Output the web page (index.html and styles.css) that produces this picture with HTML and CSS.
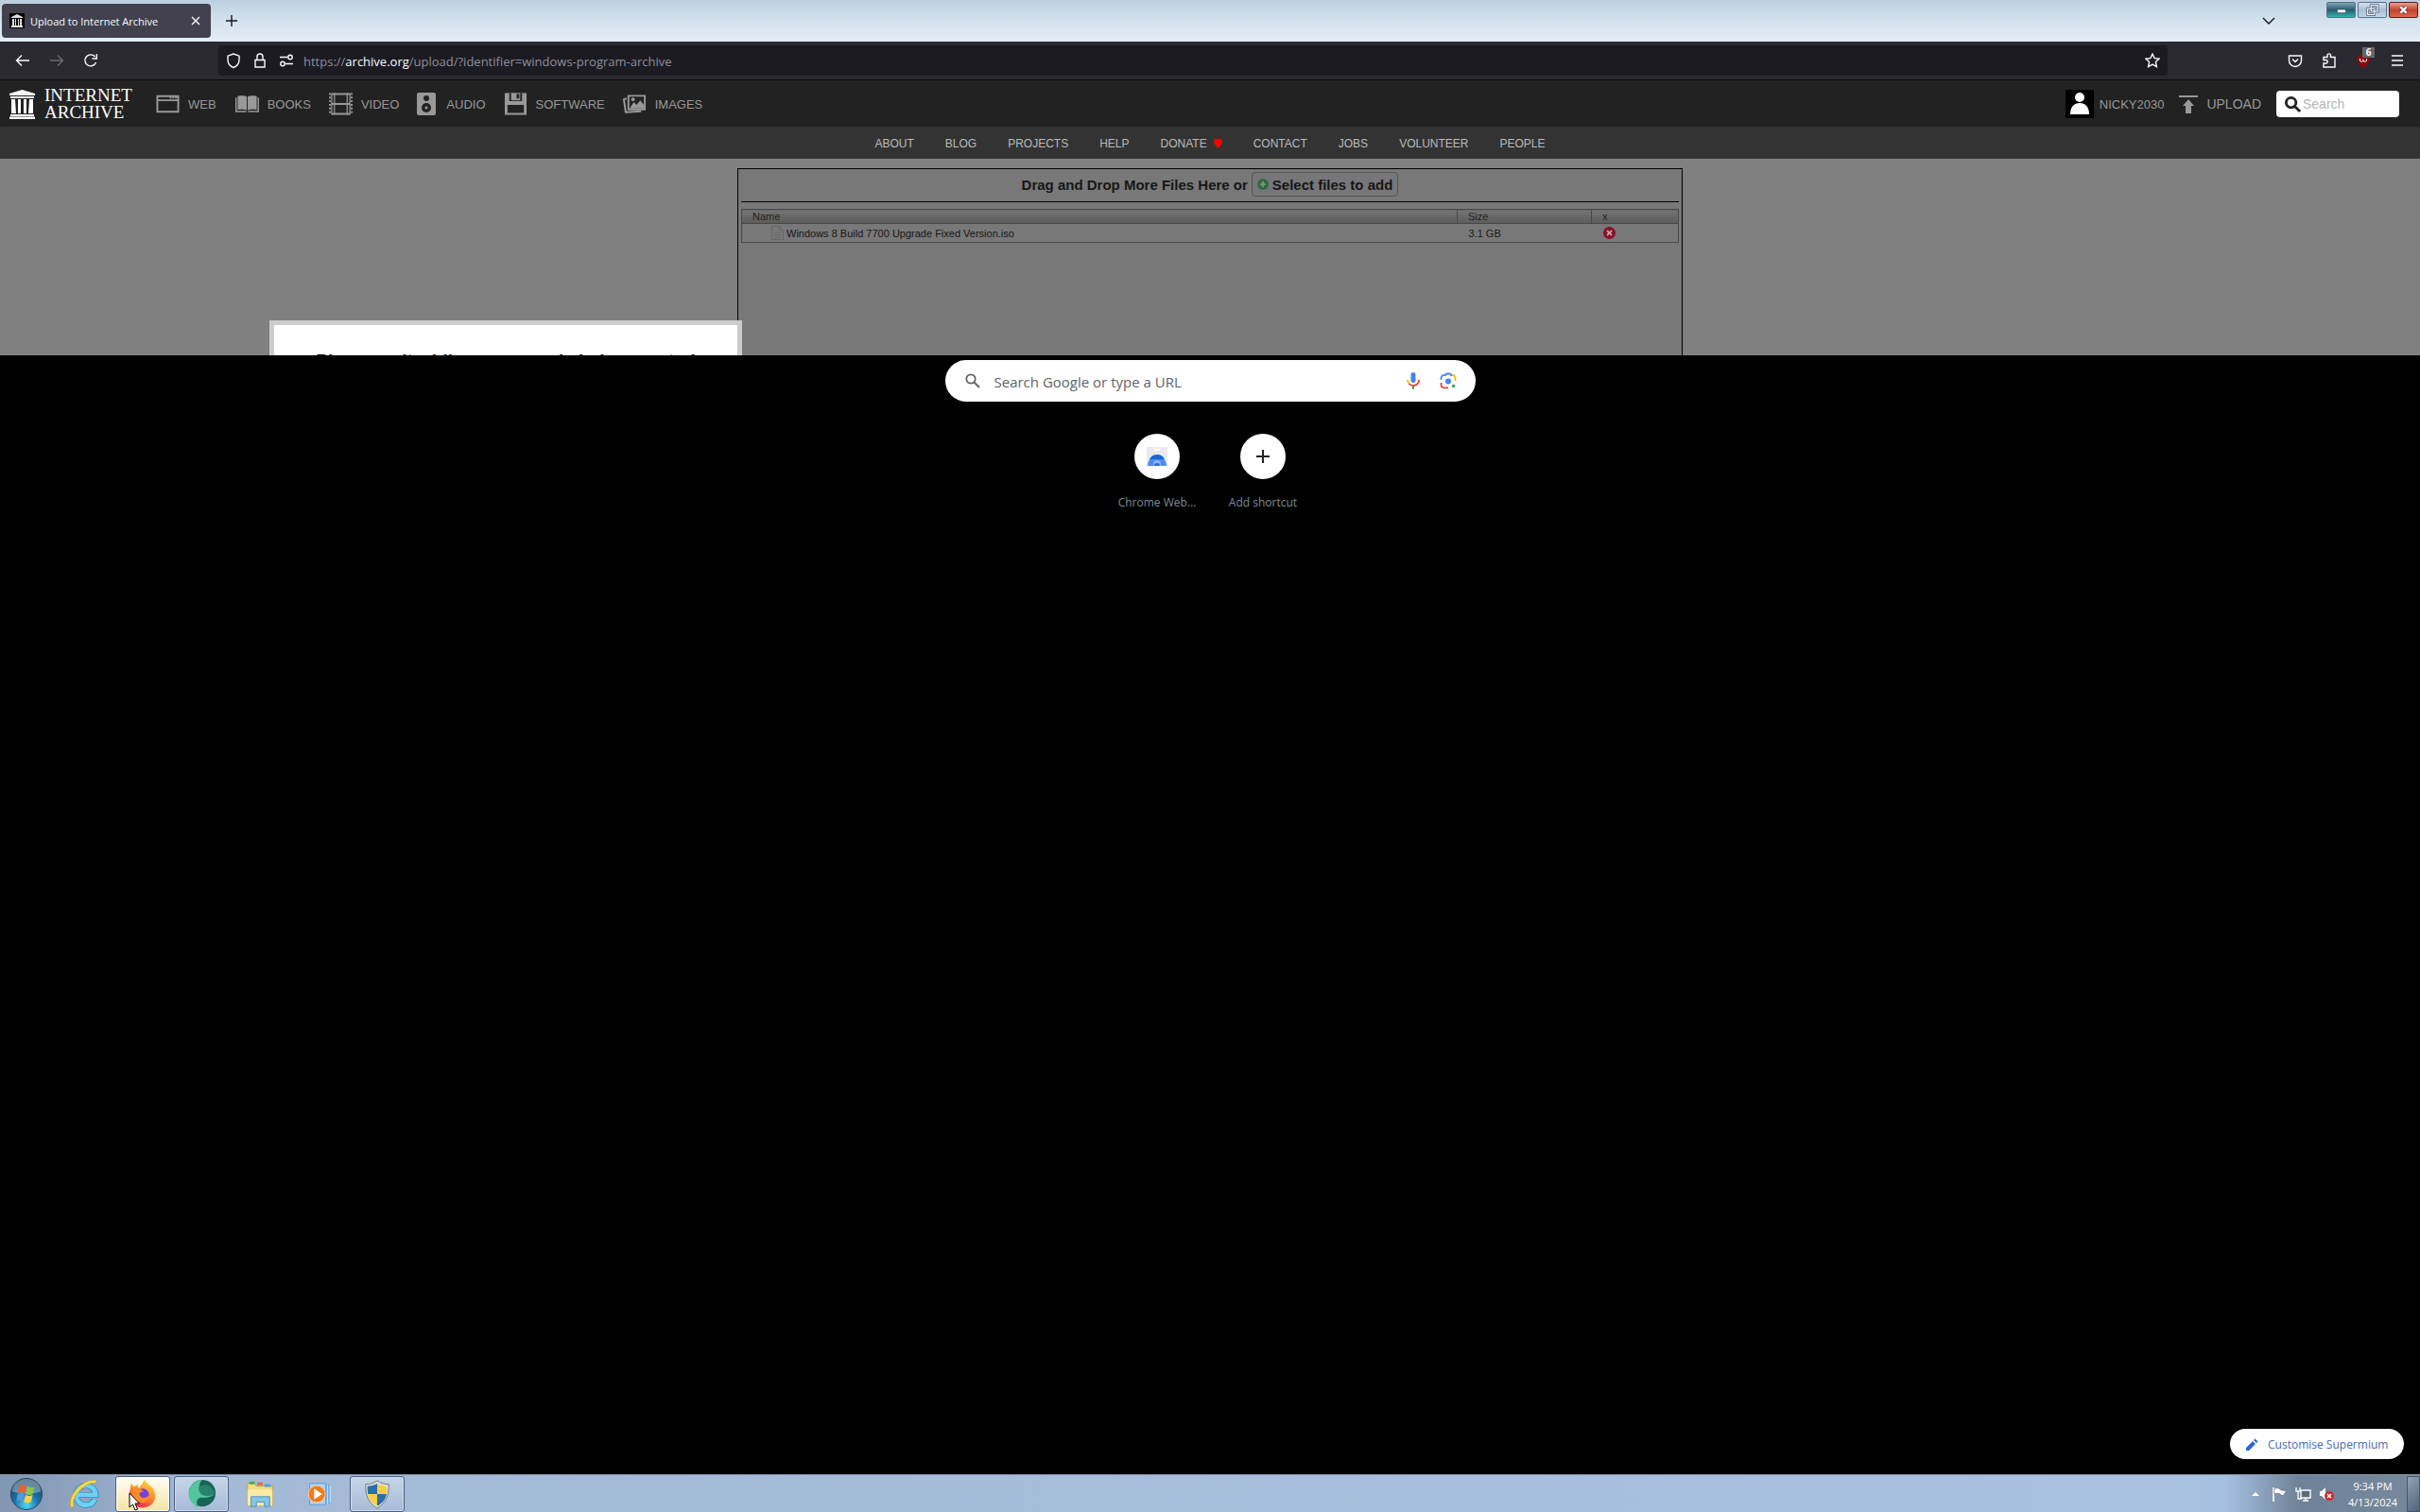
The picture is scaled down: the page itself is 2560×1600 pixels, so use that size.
FILE: index.html
```html
<!DOCTYPE html>
<html lang="en">
<head>
<meta charset="utf-8">
<title>Upload to Internet Archive</title>
<link rel="stylesheet" href="styles.css">
</head>
<body>
<div class="desktop">

  <header class="browser">
    <div class="tabstrip">
      <div class="tab">
        <svg class="favicon" viewBox="0 0 16 16"><path d="M0 0h16v16H0z" fill="#050505"/><path d="M2 4l6-3 6 3v1H2zM3 6h2v7H3zM6 6h1v7H6zM9 6h1v7H9zM11 6h2v7h-2zM2 13h12v2H2z" fill="#ddd"/></svg>
        <span class="tab-title">Upload to Internet Archive</span>
        <button class="icon-btn tab-close" aria-label="Close tab"><svg viewBox="0 0 16 16"><path d="M4 4l8 8M12 4l-8 8" class="line"/></svg></button>
      </div>
      <button class="icon-btn new-tab" aria-label="New tab"><svg viewBox="0 0 16 16"><path d="M8 2v12M2 8h12" class="line"/></svg></button>
      <button class="icon-btn list-tabs" aria-label="List all tabs"><svg viewBox="0 0 16 16"><path d="M2 5l6 6 6-6" class="line"/></svg></button>
      <div class="window-controls">
        <button class="win win-min" aria-label="Minimize"><svg viewBox="0 0 31 17"><path d="M11 8h10v4H11z" fill="#fff" stroke="#345" stroke-width=".7"/></svg></button>
        <button class="win win-max" aria-label="Restore"><svg viewBox="0 0 31 17"><path d="M14 3h8v7h-8zM10 7h8v7h-8z" fill="none" stroke="#4a5a70" stroke-width="3"/><path d="M14 3h8v7h-8zM10 7h8v7h-8z" fill="none" stroke="#eef4fa" stroke-width="1.4"/></svg></button>
        <button class="win win-close" aria-label="Close"><svg viewBox="0 0 31 17"><path d="M12 5l7 7M19 5l-7 7" stroke="#613" stroke-width="4.4" fill="none"/><path d="M12 5l7 7M19 5l-7 7" stroke="#fff" stroke-width="2.8" fill="none"/></svg></button>
      </div>
    </div>
    <div class="toolbar">
      <div class="history">
        <button class="icon-btn" aria-label="Back"><svg viewBox="0 0 16 16"><path d="M15 8H2M7 2.500L1.500 8 7 13.500" class="line"/></svg></button>
        <button class="icon-btn dim" aria-label="Forward"><svg viewBox="0 0 16 16"><path d="M1 8h13M9 2.500L14.500 8 9 13.500" class="line"/></svg></button>
        <button class="icon-btn" aria-label="Reload"><svg viewBox="0 0 16 16"><path d="M13.500 10A6 6 0 1 1 12.500 4M14.300 1v5H9.500" class="line"/></svg></button>
      </div>
      <div class="urlbar">
        <svg class="ub" viewBox="0 0 16 16"><path d="M8 1l6 2.200v4C14 11 11.500 14 8 15.500 4.500 14 2 11 2 7.200v-4z" class="line"/></svg>
        <svg class="ub" viewBox="0 0 16 16"><path d="M3 7.500h10V15H3zM5 7.500V4a3 3 0 0 1 6 0v3.500" class="line"/></svg>
        <svg class="ub" viewBox="0 0 16 16"><path d="M1 4.500h8M7 11.500h8" class="line"/><circle cx="12" cy="4.500" r="2.200" class="line"/><circle cx="4" cy="11.500" r="2.200" class="line"/></svg>
        <span class="url">https://<b>archive.org</b>/upload/?identifier=windows-program-archive</span>
        <button class="icon-btn" aria-label="Bookmark"><svg viewBox="0 0 16 16"><path d="M8 1l2.100 4.600 5 .6-3.700 3.400 1 5L8 12.100l-4.400 2.500 1-5L.9 6.200l5-.6z" class="line"/></svg></button>
      </div>
      <div class="addons">
        <button class="icon-btn" aria-label="Pocket"><svg viewBox="0 0 16 16"><path d="M1.500 3h13v5a6.500 6.500 0 0 1-13 0zM5 6.500l3 3 3-3" class="line"/></svg></button>
        <button class="icon-btn" aria-label="Extensions"><svg viewBox="0 0 16 16"><path d="M2 15v-4h2.500a1.700 1.700 0 0 0 0-3.500H2V4.500h4V2.600a1.700 1.700 0 0 1 3.500 0v1.900H14V15z" class="line"/></svg></button>
        <button class="icon-btn ublock" aria-label="Ad blocker"><svg viewBox="0 0 16 16"><path d="M8 1l6 2v5c0 4-3 6-6 8-3-2-6-4-6-8V3z" fill="#8c0610"/><path d="M4.500 6v2a1.800 1.800 0 0 0 3.500 0V6.500M8 8a1.800 1.800 0 0 0 3.500 0V6" stroke="#fff" fill="none"/></svg><span class="badge">6</span></button>
        <button class="icon-btn" aria-label="Menu"><svg viewBox="0 0 16 16"><path d="M2 3h12M2 8h12M2 13h12" class="line"/></svg></button>
      </div>
    </div>
  </header>

  <section class="site">
    <nav class="topnav">
      <a class="logo" href="#">
        <svg class="logo-mark" viewBox="0 0 27 31"><path d="M0 4L13.500 0 27 4v2H0zM1 7h25v2H1zM2 10h4l1 15H2zM9 10h3v15H9zM15 10h3v15h-3zM21 10h4v15h-5zM1 26h25v2H1zM0 28.500h27V31H0z" fill="#fff"/></svg>
        <span class="logo-text">INTERNET<br>ARCHIVE</span>
      </a>
      <a class="media web" href="#"><svg viewBox="0 0 26 24"><path d="M1.500 3.500h23v17h-23zM1 8h24" fill="none" stroke="#999" stroke-width="2"/><path d="M15 5h2M18 5h2M21 5h2" stroke="#999" stroke-width="2"/></svg>WEB</a>
      <a class="media books" href="#"><svg viewBox="0 0 26 24"><path d="M0 5h1.500v14.500H12v1.500H0zM26 5h-1.500v14.500H14v1.500h12zM2.500 3.500c4-1 8-.5 10 .5v15c-2-1-6-1.500-10-.5zM23.500 3.500c-4-1-8-.5-10 .5v15c2-1 6-1.500 10-.5z" fill="#999"/></svg>BOOKS</a>
      <a class="media video" href="#"><svg viewBox="0 0 26 24"><path d="M1 0v24M25 0v24" stroke="#999" stroke-width="2" stroke-dasharray="2 2"/><path d="M3 1h20M3 12h20M3 23h20" stroke="#999" stroke-width="2"/><path d="M3 0v24M6 0v24M20 0v24M23 0v24" stroke="#999" stroke-width="1.300"/></svg>VIDEO</a>
      <a class="media audio" href="#"><svg viewBox="0 0 20 24"><rect width="20" height="24" rx="2" fill="#999"/><circle cx="10" cy="6" r="3" fill="#222"/><circle cx="10" cy="16" r="5" fill="#222"/><circle cx="10" cy="16" r="1.500" fill="#999"/></svg>AUDIO</a>
      <a class="media software" href="#"><svg viewBox="0 0 26 24"><path d="M1 0h24v24H1z" fill="#999"/><path d="M6 0h14v9H6zM4 13h18v9H4z" fill="#222"/><path d="M8 0h10v8H8z" fill="#999"/><path d="M14 1h3v5h-3z" fill="#222"/></svg>SOFTWARE</a>
      <a class="media images" href="#"><svg viewBox="0 0 26 24"><path d="M6 3h18v15H6z" fill="none" stroke="#999" stroke-width="2"/><path d="M4 6L1 7l2 14 17-1" fill="none" stroke="#999" stroke-width="2"/><path d="M8 16l4-6 3 3 4-5 4 5v4H8z" fill="#999"/><circle cx="11" cy="7" r="2" fill="#999"/></svg>IMAGES</a>
      <a class="user" href="#"><svg viewBox="0 0 30 30"><path d="M0 0h30v30H0z" fill="#000"/><circle cx="15" cy="8" r="5" fill="#fff"/><path d="M5 26c0-8 4-12 10-12s10 4 10 12z" fill="#fff"/></svg>NICKY2030</a>
      <a class="upload" href="#"><svg viewBox="0 0 20 20"><path d="M0 1h20v2H0zM10 5l6 7h-3v8H7v-8H4z" fill="#999"/></svg>UPLOAD</a>
      <label class="ia-search"><svg viewBox="0 0 20 20"><circle cx="8" cy="8" r="5.500" fill="none" stroke="#222" stroke-width="3"/><path d="M12 12l6 6" stroke="#222" stroke-width="3"/></svg><input type="text" placeholder="Search" aria-label="Search the archive"></label>
    </nav>
    <nav class="subnav">
      <a href="#">ABOUT</a><a href="#">BLOG</a><a href="#">PROJECTS</a><a href="#">HELP</a>
      <a href="#">DONATE<svg class="heart" viewBox="0 0 10 12"><path d="M0 1l2-1h2l1 1 1-1h2l2 1v5l-5 6-5-6z" fill="#f00"/></svg></a>
      <a href="#">CONTACT</a><a href="#">JOBS</a><a href="#">VOLUNTEER</a><a href="#">PEOPLE</a>
    </nav>
    <main class="upload-page">
      <div class="panel">
        <div class="drop">Drag and Drop More Files Here or
          <button class="add"><svg viewBox="0 0 12 12"><circle cx="6" cy="6" r="6" fill="#2f6b45"/><path d="M6 3v6M3 6h6" stroke="#8a958e" stroke-width="1.600"/></svg>Select files to add</button>
        </div>
        <table class="files">
          <thead><tr><th>Name</th><th class="size">Size</th><th class="remove">x</th></tr></thead>
          <tbody><tr><td><span class="file"><svg viewBox="0 0 13 15"><path d="M.5.5h8l4 4v10H.5zM8.500.5v4h4M3 7h7M3 9.500h7M3 12h7" fill="none" stroke="#666"/></svg>Windows 8 Build 7700 Upgrade Fixed Version.iso</span></td><td>3.1 GB</td><td><button class="del" aria-label="Remove file"><svg viewBox="0 0 13 13"><circle cx="6.500" cy="6.500" r="6.500" fill="#8c0e25"/><path d="M4 4l5 5M9 4L4 9" stroke="#b9a6a6" stroke-width="1.800"/></svg></button></td></tr></tbody>
        </table>
      </div>
      <div class="dialog" role="dialog">Please wait while your page is being created</div>
    </main>
  </section>

  <section class="newtab">
    <label class="google">
      <svg class="g-find" viewBox="0 0 18 18"><circle cx="7" cy="7" r="4.700" fill="none" stroke="#5f6368" stroke-width="1.800"/><path d="M10.500 10.500l5.500 5.500" stroke="#5f6368" stroke-width="2"/></svg>
      <input type="text" placeholder="Search Google or type a URL" aria-label="Search Google or type a URL">
      <svg class="g-mic" viewBox="0 0 18 20"><rect x="6.500" y="1" width="5" height="11" rx="2.500" fill="#4285f4"/><path d="M3 9a6 6 0 0 0 1.500 4" stroke="#fbbc04" stroke-width="1.800" fill="none"/><path d="M4.500 13A6 6 0 0 0 15 9" stroke="#ea4335" stroke-width="1.800" fill="none"/><path d="M9 15v4" stroke="#34a853" stroke-width="1.800"/></svg>
      <svg class="g-lens" viewBox="0 0 18 18"><path d="M1.500 8V6a3 3 0 0 1 3-3" stroke="#4285f4" stroke-width="1.800" fill="none"/><path d="M4.500 3h1.500l1-1.500h4l1 1.500h1.500" stroke="#4285f4" stroke-width="1.800" fill="none"/><path d="M13.500 3a3 3 0 0 1 3 3v3" stroke="#fbbc04" stroke-width="1.800" fill="none"/><path d="M1.500 11v2a3 3 0 0 0 3 3.300H9" stroke="#ea4335" stroke-width="1.800" fill="none"/><circle cx="9" cy="9.500" r="3" fill="#4285f4"/><circle cx="14.500" cy="14.500" r="1.700" fill="#34a853"/></svg>
    </label>
    <div class="shortcuts">
      <a class="shortcut" href="#"><span class="disc"><svg viewBox="0 0 22 20"><rect width="22" height="20" rx="1" fill="#e8eaed"/><path d="M8 3h6" stroke="#fff" stroke-width="2"/><path d="M1 20a10 11 0 0 1 20 0z" fill="#4c8bf5"/><path d="M3 13a9 9 0 0 1 16 0h-8z" fill="#1967d2"/><circle cx="11" cy="18" r="4" fill="#8ab4f8"/><path d="M8 20a3 3 0 0 1 6 0z" fill="#3367d6"/></svg></span>Chrome Web...</a>
      <a class="shortcut" href="#"><span class="disc"><svg viewBox="0 0 22 20"><path d="M11 3v14M4 10h14" stroke="#202124" stroke-width="2"/></svg></span>Add shortcut</a>
    </div>
    <button class="customise"><svg viewBox="0 0 14 14"><path d="M1 13v-3l7-7 3 3-7 7zM9 2l1.500-1.500 3 3L12 5z" fill="#2b66cf"/></svg>Customise Supermium</button>
  </section>

  <footer class="taskbar">
    <button class="task start" aria-label="Start"><svg viewBox="0 0 38 38"><defs><radialGradient id="orb" cx=".5" cy=".85" r=".8"><stop offset="0" stop-color="#4fd8f4"/><stop offset=".5" stop-color="#1a6ea8"/><stop offset="1" stop-color="#274863"/></radialGradient></defs><circle cx="19" cy="19" r="17.500" fill="url(#orb)" stroke="#2b4560"/><path d="M3 16a16 14 0 0 1 32 0q-16 6-32 0z" fill="#b5cbda" opacity=".45"/><path d="M11 10q4-3 8 0l-2 8q-4-2-8 0z" fill="#e8622c"/><path d="M20 10q4 3 8 1l-2 8q-4 2-8 0z" fill="#8cc44a"/><path d="M9 19q4-2 8 0l-2 8q-4-2-7 0z" fill="#4b9be0"/><path d="M18 20q4 2 8 0l-2 8q-4 2-8 0z" fill="#fbd14b"/></svg></button>
    <button class="task" aria-label="Internet Explorer"><svg viewBox="0 0 34 34"><path d="M29 23A11 11 0 1 1 30 18H10" fill="none" stroke="#2487c0" stroke-width="6.500"/><path d="M29 23A11 11 0 1 1 30 18H10" fill="none" stroke="#6fd0f3" stroke-width="5"/><path d="M4 31C-1 23 14 2 30 3" fill="none" stroke="#d8a61b" stroke-width="4"/><path d="M4 31C-1 23 14 2 30 3" fill="none" stroke="#fbdc50" stroke-width="2.500"/></svg></button>
    <button class="task open active" aria-label="Firefox"><svg viewBox="0 0 34 34"><defs><linearGradient id="fox" x1=".8" y1="0" x2=".3" y2="1"><stop offset="0" stop-color="#ffe14a"/><stop offset=".5" stop-color="#ff8a2b"/><stop offset="1" stop-color="#f0205e"/></linearGradient></defs><path d="M19 1c2 4 5 5 7 7 8 6 7 22-6 24C8 34 1 26 2 16L4 5l3 4 4-3 1 4c3-1 4-5 7-9z" fill="url(#fox)"/><circle cx="17" cy="18" r="7" fill="#7143dc"/><path d="M5 12c5-4 9-1 13 2-4 1-6 2-4 5 3 4 8 2 10-1 1 6-5 10-11 8-7-2-9-8-8-14z" fill="#ff8a28"/></svg></button>
    <button class="task open" aria-label="Supermium"><svg viewBox="0 0 34 34"><circle cx="18" cy="16" r="15" fill="#176555"/><path d="M8 5A15 15 0 0 0 7 27l7 7c-4-7-2-13 3-13 7 0 12 0 15-5-3 4-13 4-16-3C14 9 14 5 18 1 14 1 10 3 8 5z" fill="#53c4a0"/><path d="M14 9c7-5 15-2 18 7-5 5-15 4-17-1-1-2-1-4-1-6z" fill="#28836e"/></svg></button>
    <button class="task" aria-label="Windows Explorer"><svg viewBox="0 0 34 34"><path d="M3 5h8l2 3h18v22H3z" fill="#f4dc83" stroke="#c99d3c"/><path d="M5 3h6v3H5z" fill="#3ab54a"/><path d="M14 4h6v3h-6z" fill="#e36a3a"/><path d="M22 6h7v3h-7z" fill="#4aa0dc"/><path d="M3 12h28v18H3z" fill="#fae9a5"/><path d="M7 31V20h21v11h-6v-5h-9v5z" fill="#83c6e6" stroke="#4a94bf"/></svg></button>
    <button class="task" aria-label="Media Player"><svg viewBox="0 0 34 34"><path d="M10 6h19l2 22H12z" fill="#6faee0"/><path d="M7 5h18v24H7z" fill="#a9d2f0" stroke="#5d9dd0"/><path d="M27 7v21M30 8v19" stroke="#d8ecfa"/><circle cx="15" cy="17" r="9.500" fill="#f07b1c" stroke="#fbd0a2"/><path d="M12 11l9 6-9 6z" fill="#fff"/></svg></button>
    <button class="task open" aria-label="Administrator tool"><svg viewBox="0 0 34 34"><path d="M17 2c4 3 8 4 13 4 0 12-2 20-13 27C6 26 4 18 4 6c5 0 9-1 13-4z" fill="#dfe6ea" stroke="#68747d"/><path d="M17 5v12H6.500C6 14 6 11 6 8c4 0 8-1 11-3zM17 17h10.500c-1 6-4 10-10.500 13.500z" fill="#2e6ea8"/><path d="M17 5c3 2 7 3 11 3 0 3 0 6-.5 9H17zM17 17v13.500C10.500 27 7.500 23 6.500 17z" fill="#f6cf45"/></svg></button>
    <div class="tray">
      <svg class="t-up" viewBox="0 0 10 6"><path d="M1 5l4-4 4 4z" fill="#fff"/></svg>
      <svg class="t-icon" viewBox="0 0 17 16"><path d="M2 1v15" stroke="#fff" stroke-width="1.600"/><path d="M3 2c3-1 5 0 6 1s4 2 7 1l-3 5c-2 1-3 0-4-1s-3-1-6 0z" fill="#fff" stroke="#445" stroke-width=".5"/></svg>
      <svg class="t-icon" viewBox="0 0 17 16"><path d="M6 4h10v8H6zM8 15h6M11 12v3" fill="#596b80" stroke="#fff" stroke-width="1.400"/><path d="M1 1v4h4V1M3 5v8h4" fill="none" stroke="#fff" stroke-width="1.300"/></svg>
      <svg class="t-icon" viewBox="0 0 17 16"><path d="M1 5h2l4-4v13l-4-4H1z" fill="#fff"/><circle cx="11" cy="10" r="5" fill="#d22a2a"/><path d="M9 8l4 4M13 8l-4 4" stroke="#fff" stroke-width="1.500"/></svg>
      <div class="clock"><span>9:34 PM</span><span>4/13/2024</span></div>
      <button class="peek" aria-label="Show desktop"></button>
    </div>
    <svg class="cursor" viewBox="0 0 12 20"><path d="M1 1v15l3.500-3 2.500 6 2.500-1L7 12h4.500z" fill="#fff" stroke="#000"/></svg>
  </footer>
</div>
</body>
</html>
```

FILE: styles.css
```css
* { box-sizing: border-box; }
body { margin: 0; background: #000; font-family: "Liberation Sans", Arial, sans-serif; }
a { color: inherit; text-decoration: none; }
button, input { font: inherit; color: inherit; border: 0; padding: 0; margin: 0; background: none; }
svg { display: block; flex: none; }
.line { fill: none; stroke: currentColor; stroke-width: 1.4; }
.desktop { min-height: 100vh; display: flex; flex-direction: column; }

/* Browser window */
.browser { font-family: "Open Sans", "Noto Sans", sans-serif; }
.icon-btn { width: 16px; height: 16px; flex: none; color: inherit; }
.tabstrip { height: 44px; display: flex; align-items: center; padding: 0 2px; background: linear-gradient(#bccfdf, #d4e1ee 50%, #e4edf7); color: #15141a; }
.tab { width: 221px; height: 36px; padding: 0 8px; display: flex; align-items: center; gap: 6px; background: #42414d; border-radius: 4px; color: #fbfbfe; font-size: 11px; }
.favicon { width: 16px; height: 16px; }
.tab-title { flex: 1; white-space: nowrap; }
.tab-close svg { width: 16px; height: 16px; }
.new-tab { margin-left: 14px; }
.list-tabs { margin-left: auto; margin-right: 53px; }
.new-tab svg, .list-tabs svg { width: 16px; height: 16px; }
.window-controls { display: flex; gap: 2px; align-self: flex-start; padding-top: 2px; }
.win { width: 31px; height: 17px; border: 1px solid #55708b; border-radius: 2px; }
.win svg { width: 29px; height: 15px; }
.win-min { background: linear-gradient(#7fa3b5, #2b5a70 50%, #2fb5a6); }
.win-max { background: linear-gradient(#d5e1ee, #a9bfd5 50%, #c3d5e7); }
.win-close { background: linear-gradient(#e8a090, #c24430 50%, #d9664c); border-color: #5a1c1c; }
.toolbar { height: 41px; display: flex; align-items: center; background: #2b2a33; border-bottom: 1px solid #0c0c0d; color: #fbfbfe; }
.history { width: 231px; display: flex; gap: 20px; padding-left: 16px; }
.dim { color: #6c6b74; }
.urlbar { flex: 1; height: 32px; padding: 0 8px; display: flex; align-items: center; gap: 12px; background: #1c1b22; border-radius: 4px; font-size: 13px; }
.ub { width: 16px; height: 18px; }
.url { flex: 1; margin-left: -2px; padding-top: 2px; color: #8f8f9a; }
.url b { font-weight: 400; color: #fbfbfe; }
.addons { width: 267px; display: flex; justify-content: flex-end; gap: 20px; padding-right: 16px; }
.ublock { position: relative; }
.badge { position: absolute; left: 7px; top: -6px; width: 13px; height: 11px; background: #666; font-size: 10px; line-height: 11px; font-weight: 700; text-align: center; }

/* Archive site */
.site { height: 291px; overflow: hidden; display: flex; flex-direction: column; }
.topnav { height: 49px; flex: none; display: flex; align-items: center; padding: 1px 22px 0 10px; background: #222; color: #999; font-size: 13px; }
.logo { display: flex; gap: 10px; align-items: center; width: 155px; color: #fff; }
.logo-mark { width: 27px; height: 31px; }
.logo-text { font: 19px/18px "Liberation Serif", "Times New Roman", serif; }
.media { display: flex; align-items: center; gap: 9px; margin-right: 19px; }
.media svg { width: 25px; height: 24px; }
.media.web { margin-right: 20px; }
.media.audio svg { width: 20px; }
.media.audio { gap: 11px; }
.user { margin-left: auto; display: flex; align-items: center; gap: 6px; margin-right: 16px; }
.user svg { width: 30px; height: 30px; }
.upload { display: flex; align-items: center; gap: 9px; margin-right: 16px; font-size: 14px; }
.upload svg { width: 20px; height: 20px; }
.ia-search { width: 130px; height: 28px; padding-left: 8px; display: flex; align-items: center; gap: 1px; background: #fff; border-radius: 4px; font-size: 14px; color: #222; }
.ia-search svg { width: 19px; height: 19px; }
.ia-search input { width: 90px; }
.ia-search input::placeholder { color: #b5b5b5; }
.subnav { height: 34px; flex: none; display: flex; justify-content: center; align-items: center; gap: 33px; padding-top: 1px; background: #333; color: #bbb; font-size: 12px; }
.subnav a { display: flex; align-items: center; gap: 7px; }
.heart { width: 9px; height: 10px; }
.upload-page { position: relative; flex: 1; padding-top: 10px; background: #808080; }
.panel { width: 1000px; height: 420px; margin: 0 auto; padding: 0 3px; border: 1px solid #000; background: #787878; color: #161616; }
.drop { height: 35px; padding-bottom: 2px; display: flex; justify-content: center; align-items: center; gap: 4px; border-bottom: 1px solid #000; font-size: 15px; font-weight: 700; }
.add { height: 26px; padding: 0 5px; display: flex; align-items: center; gap: 4px; border: 1px solid #555; border-radius: 4px; background: #77777a; }
.add svg { width: 12px; height: 12px; }
.files { width: 100%; margin-top: 7px; border-collapse: collapse; table-layout: fixed; border: 1px solid #484848; font-size: 11px; }
.files th { height: 15px; padding: 0 11px; text-align: left; font-weight: 400; color: #222; line-height: 14px; background: linear-gradient(#747474, #5c5c5c); border-bottom: 1px solid #484848; }
.files th + th { border-left: 1px solid #484848; }
.files .size { width: 142px; }
.files .remove { width: 92px; }
.files td { height: 20px; padding: 0 12px; line-height: 14px; }
.file { display: flex; align-items: center; gap: 3px; padding-left: 19px; }
.file svg { width: 13px; height: 15px; }
.del { display: block; }
.del svg { width: 13px; height: 13px; }
.dialog { position: absolute; left: 285px; top: 171px; width: 500px; height: 200px; padding-top: 26px; border: 5px solid #ccc; background: #fff; color: #000; font-size: 19px; line-height: 24px; font-weight: 700; text-align: center; }

/* New tab page */
.newtab { flex: 1; display: flex; flex-direction: column; align-items: center; padding: 5px 17px 16px; background: #000; font-family: "Open Sans", "Noto Sans", sans-serif; }
.google { width: 561px; height: 44px; padding: 0 20px; display: flex; align-items: center; border-radius: 22px; background: #fff; font-size: 15px; }
.g-find { width: 18px; height: 18px; }
.google input { flex: 1; margin-left: 14px; padding-top: 2px; }
.google input::placeholder { color: #5f6368; opacity: 1; }
.g-mic { width: 18px; height: 20px; margin-right: 19px; }
.g-lens { width: 18px; height: 18px; }
.shortcuts { display: flex; margin-top: 34px; }
.shortcut { width: 112px; display: flex; flex-direction: column; align-items: center; gap: 17px; color: #7f8c94; font-size: 12px; line-height: 16px; }
.disc { width: 48px; height: 48px; display: grid; place-items: center; border-radius: 50%; background: #fff; }
.disc svg { width: 22px; height: 20px; }
.customise { margin-top: auto; align-self: flex-end; width: 184px; height: 32px; padding: 1px 16px 0; display: flex; align-items: center; gap: 10px; border-radius: 16px; background: #fff; color: #4467b8; font-size: 12px; white-space: nowrap; }
.customise svg { width: 14px; height: 14px; }

/* Taskbar */
.taskbar { position: relative; height: 40px; display: flex; align-items: center; gap: 4px; border-top: 1px solid #8496ae; background: linear-gradient(90deg, #8095b0, #a3b9d6 8%, #a9c1df 90%, #a5c0e0 92%, #6f8298 95%, #77889b); font-family: "Open Sans", "Noto Sans", sans-serif; }
.task { width: 58px; height: 38px; display: grid; place-items: center; border-radius: 3px; }
.task svg { width: 32px; height: 32px; }
.task.start { width: 56px; }
.task.start svg { width: 36px; height: 36px; }
.open { border: 1px solid #4d6080; background: linear-gradient(#c6d5e8, #a7bbd6); box-shadow: inset 0 0 0 1px #ccdaec; }
.active { background: linear-gradient(#fffef5, #f5e3a3); box-shadow: inset 0 0 0 1px #fff; }
.tray { margin-left: auto; display: flex; align-items: center; gap: 8px; height: 100%; color: #fff; }
.t-up { width: 10px; height: 6px; margin-right: 4px; }
.t-icon { width: 17px; height: 16px; }
.clock { width: 56px; margin-left: 4px; display: flex; flex-direction: column; align-items: center; font-size: 11px; line-height: 17px; }
.peek { width: 14px; height: 38px; border: 1px solid #44566c; background: linear-gradient(135deg, #93a2b3, #51647c); }
.cursor { position: absolute; left: 136px; top: 18px; width: 12px; height: 20px; }
```
